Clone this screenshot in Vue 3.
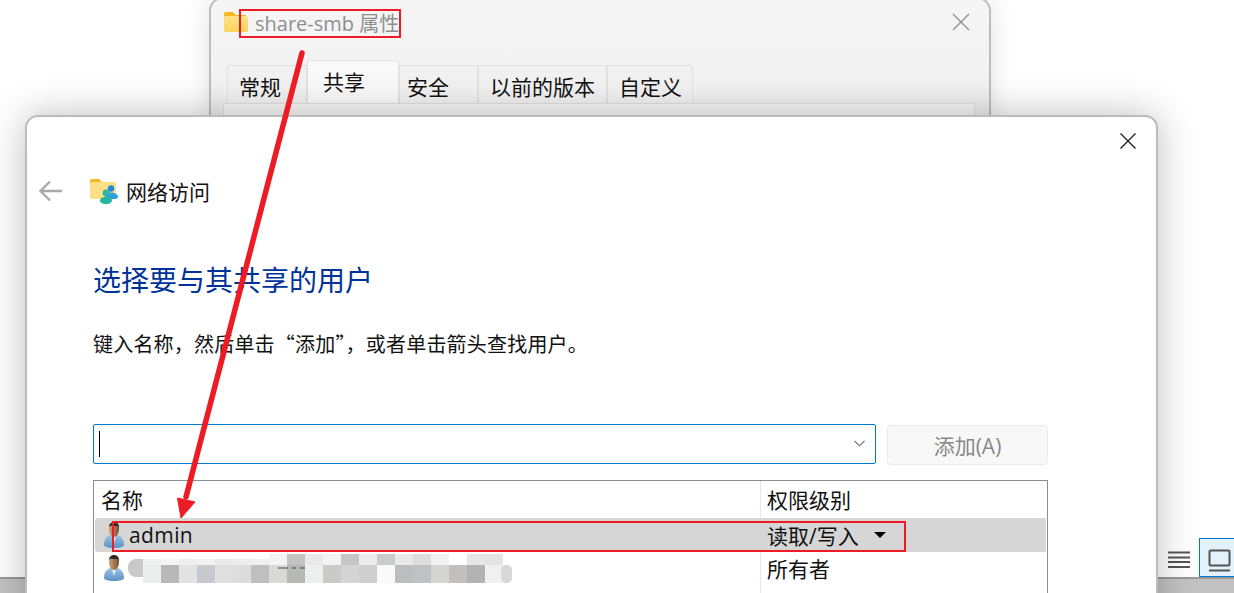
<script setup>
const tabs = [
  { label: '常规', w: 80, pad: 11 },
  { label: '共享', w: 92, pad: 15, active: true },
  { label: '安全', w: 79, pad: 7 },
  { label: '以前的版本', w: 129, pad: 11 },
  { label: '自定义', w: 86, pad: 11 }
]
const top = ['#f0f1f1','#f5f5f5','#eeeeee','#f2f2f2','#e9e9e9','#ececec','#f0f0f0','#f4f4f4','#c4c3c1','#e9e9e9','#f3f3f3','#c6c6c6','#ececec','#c8cccc','#e9e9e9','#dedddd','#f1f1f1','#ffffff','#e6e6e6','#e4e4e4']
const bottom = ['#eceeed','#b8b8b8','#e2e2e2','#c6cad0','#e0e0e0','#dcdcdc','#bfbfc1','#d9d9d6','#b6b8b6','#edefef','#cacac8','#d4d4d4','#d0cfcf','#fafafa','#bcbdbe','#bfc2c3','#d4d4d0','#c3bfbc','#b2b3b4','#f0f0f0']
</script>

<template>
  <div class="desk">
    <div class="explorer">
      <div class="status">
        <svg class="list-ic" width="22" height="17" viewBox="0 0 22 17">
          <path d="M0 1.500h22M0 6.500h22M0 11h22M0 16h22" stroke="#555" stroke-width="1.800" fill="none" />
        </svg>
        <div class="view-btn">
          <svg width="24" height="24" viewBox="0 0 24 24">
            <rect x="1.500" y="1.500" width="20" height="15" rx="1" fill="none" stroke="#555" stroke-width="2" />
            <path d="M1 21.500h21" stroke="#555" stroke-width="2" />
          </svg>
        </div>
      </div>
    </div>

    <section class="back-win">
      <header class="back-title">
        <svg width="26" height="22" viewBox="0 0 26 22">
          <defs>
            <linearGradient id="fy" x1="0" y1="0" x2="0" y2="1">
              <stop offset="0" stop-color="#ffe38a" />
              <stop offset="1" stop-color="#fcd25a" />
            </linearGradient>
          </defs>
          <path d="M1 3a2 2 0 0 1 2-2h7l3 3h10v4H1z" fill="#f5b81f" />
          <rect x="1" y="5" width="24" height="16" rx="2" fill="url(#fy)" />
        </svg>
        <span class="back-name">share-smb 属性</span>
        <svg class="back-x" width="18" height="18" viewBox="0 0 18 18">
          <path d="M1 1l16 16M17 1L1 17" stroke="#8f8f8f" stroke-width="1.300" />
        </svg>
      </header>
      <nav class="tabs">
        <div
          v-for="t in tabs"
          :key="t.label"
          class="tab"
          :class="{ active: t.active }"
          :style="{ width: t.w + 'px', paddingLeft: t.pad + 'px' }"
        >{{ t.label }}</div>
      </nav>
      <div class="back-panel"></div>
    </section>

    <section class="front-win">
      <svg class="front-x" width="16" height="16" viewBox="0 0 16 16">
        <path d="M0.500 0.500l15 15M15.500 0.500l-15 15" stroke="#222" stroke-width="1.400" />
      </svg>
      <header class="nav-row">
        <svg class="back-arrow" width="24" height="22" viewBox="0 0 24 22">
          <path d="M23 11H2M11 1.500L1.500 11l9.500 9.500" fill="none" stroke="#a9a9a9" stroke-width="2.400" />
        </svg>
        <svg class="net-ic" width="28" height="26" viewBox="0 0 28 26">
          <path d="M0 3a2 2 0 0 1 2-2h7l3 3h12v4H0z" fill="#f4b71f" />
          <rect x="0" y="4" width="26" height="17" rx="2" fill="#fcdf86" />
          <circle cx="21" cy="10.500" r="3.200" fill="#1d8be0" />
          <path d="M15 19c0-3 3-4.500 6-4.500s7 1.500 7 4.500c0 1.200-1.500 2-3 2h-8c-1.200 0-2-.8-2-2z" fill="#2e9fdf" />
          <circle cx="16" cy="15" r="3.400" fill="#2bb7a6" />
          <path d="M10 22.500c0-2.500 3-3.500 6-3.500s6 1 6 3.500-3 3.500-6 3.500-6-1-6-3.500z" fill="#25b5a1" />
        </svg>
        <span class="nav-title">网络访问</span>
      </header>

      <div class="body">
        <h1 class="heading">选择要与其共享的用户</h1>
        <p class="hint">键入名称，然后单击“添加”，或者单击箭头查找用户。</p>

        <div class="add-row">
          <div class="combo">
            <span class="caret"></span>
            <svg class="chev" width="11" height="7" viewBox="0 0 11 7">
              <path d="M0.500 0.800l5 5 5-5" fill="none" stroke="#666" stroke-width="1.100" />
            </svg>
          </div>
          <button class="add-btn" type="button">添加(A)</button>
        </div>

        <div class="table">
          <div class="row head">
            <div class="c1 label">名称</div>
            <div class="c2">权限级别</div>
          </div>
          <div class="row sel">
            <div class="c1 user">
              <svg class="person" width="22" height="28" viewBox="0 0 22 28">
                <defs>
                  <linearGradient id="skin" x1="0" y1="0" x2="1" y2="0">
                    <stop offset="0" stop-color="#d0a274" />
                    <stop offset="1" stop-color="#7a5030" />
                  </linearGradient>
                  <linearGradient id="shirt" x1="0" y1="0" x2="0" y2="1">
                    <stop offset="0" stop-color="#9cc2e2" />
                    <stop offset="1" stop-color="#5b92c4" />
                  </linearGradient>
                </defs>
                <path d="M1 24c0-6 3-9 6.500-10h7c3.500 1 6.500 4 6.500 10 0 2-4 3-10 3S1 26 1 24z" fill="url(#shirt)" />
                <path d="M8.500 14l2.500 8 2.500-8z" fill="#e6eef5" />
                <ellipse cx="11" cy="8.500" rx="5" ry="7.500" fill="url(#skin)" />
                <path d="M6 6C6 2.500 8.500 1 11 1s5.500 1.500 5 7l-1-3C12 5 9 5 7.500 4.500z" fill="#2f2a26" />
              </svg>
              <span class="uname">admin</span>
            </div>
            <div class="c2 perm">
              <span>读取/写入</span>
              <span class="tri"></span>
            </div>
          </div>
          <div class="row last">
            <div class="c1 user">
              <svg class="person" width="22" height="28" viewBox="0 0 22 28">
                <path d="M1 24c0-6 3-9 6.500-10h7c3.500 1 6.500 4 6.500 10 0 2-4 3-10 3S1 26 1 24z" fill="url(#shirt)" />
                <path d="M8.500 14l2.500 8 2.500-8z" fill="#e6eef5" />
                <ellipse cx="11" cy="8.500" rx="5" ry="7.500" fill="url(#skin)" />
                <path d="M6 6C6 2.500 8.500 1 11 1s5.500 1.500 5 7l-1-3C12 5 9 5 7.500 4.500z" fill="#2f2a26" />
              </svg>
            </div>
            <div class="c2">所有者</div>
          </div>
        </div>
      </div>
    </section>

    <svg class="mosaic" width="390" height="34" viewBox="0 0 390 34">
      <rect x="0" y="6" width="30" height="18" rx="8" fill="#c9c9c9" />
      <rect
        v-for="(c, i) in top"
        :key="'t' + i"
        :x="15 + i * 18"
        :y="i < 7 ? 6 : 1"
        width="18"
        :height="i < 7 ? 6 : 11"
        :fill="c"
      />
      <rect
        v-for="(c, i) in bottom"
        :key="'b' + i"
        :x="15 + i * 18"
        y="12"
        width="18"
        height="18"
        :fill="c"
      />
      <rect x="373" y="12" width="11" height="18" rx="5" fill="#d8d8d8" />
      <path d="M150 15h10M164 15h4M172 15h5" stroke="#444" stroke-width="1" />
    </svg>

    <div class="mark mark-title"></div>
    <div class="mark mark-row"></div>

    <svg class="arrow" width="1234" height="593" viewBox="0 0 1234 593">
      <path d="M302 53L186 497" stroke="#ed1c24" stroke-width="5.500" stroke-linecap="round" fill="none" />
      <path d="M181 518L177.500 498L195 502z" fill="#ed1c24" stroke="#ed1c24" stroke-width="1" stroke-linejoin="round" />
    </svg>
  </div>
</template>

<style>
html, body { margin: 0; padding: 0; background: #fff; }
</style>

<style scoped>
.desk {
  position: relative;
  width: 1234px;
  height: 593px;
  overflow: hidden;
  background: #c2c2c2;
  font-family: "Open Sans", "Noto Sans CJK SC", sans-serif;
  color: #111;
}
.explorer {
  position: absolute;
  left: 0;
  top: 0;
  width: 1234px;
  height: 577px;
  background: #fff;
  border-bottom: 2px solid #9a9a9a;
}
.status {
  position: absolute;
  right: 0;
  bottom: 0;
  display: flex;
  align-items: center;
  gap: 9px;
}
.list-ic { margin-top: 3px; }
.view-btn {
  width: 35px;
  height: 39px;
  box-sizing: border-box;
  padding: 10px 0 0 8px;
  background: #e3f1fa;
  border: 1px solid #0078d4;
  border-right: none;
}
.back-win {
  position: absolute;
  left: 209px;
  top: -3px;
  width: 782px;
  height: 140px;
  box-sizing: border-box;
  border: 2px solid #bdbdbd;
  border-radius: 14px;
  background: linear-gradient(#f5f5f5, #f2f2f2 60%, #e9e9e9);
  box-shadow: 0 0 26px rgba(0, 0, 0, 0.12);
}
.back-title {
  display: flex;
  align-items: center;
  height: 44px;
  margin-top: 1px;
  padding-left: 12px;
  position: relative;
}
.back-name {
  margin-left: 6px;
  font-size: 20px;
  color: #8f8f8f;
}
.back-x {
  position: absolute;
  right: 19px;
  top: 13px;
}
.tabs {
  display: flex;
  align-items: flex-end;
  height: 58px;
  margin: 1px 0 0 16px;
}
.tab {
  height: 38px;
  box-sizing: border-box;
  padding-top: 2px;
  border: 1px solid #e2e2e2;
  border-bottom: none;
  background: #f1f1f1;
  display: flex;
  align-items: center;
  font-size: 21px;
  color: #111;
}
.tab.active {
  height: 43px;
  padding-top: 0;
  padding-bottom: 3px;
  background: #f9f9f9;
  border-radius: 3px 3px 0 0;
}
.back-panel {
  width: 752px;
  height: 30px;
  margin-left: 12px;
  box-sizing: border-box;
  border: 1px solid #e0e0e0;
  background: #f7f7f7;
}
.front-win {
  position: absolute;
  left: 25px;
  top: 115px;
  width: 1133px;
  height: 520px;
  box-sizing: border-box;
  border: 2px solid #bcbcbc;
  border-radius: 13px;
  background: #fff;
  box-shadow: 0 0 38px rgba(0, 0, 0, 0.26);
}
.front-x {
  position: absolute;
  right: 20px;
  top: 16px;
}
.nav-row {
  display: flex;
  align-items: center;
  height: 30px;
  margin-top: 59px;
  padding-left: 12px;
}
.back-arrow { flex: none; }
.net-ic { margin-left: 27px; flex: none; }
.nav-title {
  margin-left: 8px;
  font-size: 21px;
}
.body {
  padding-left: 66px;
}
.heading {
  margin: 54px 0 0;
  font-size: 28px;
  line-height: 40px;
  font-weight: 400;
  color: #003399;
}
.hint {
  margin: 29px 0 0;
  font-family: "Noto Sans CJK SC", sans-serif;
  font-size: 20px;
  letter-spacing: 0.2px;
  line-height: 30px;
}
.add-row {
  display: flex;
  gap: 11px;
  width: 955px;
  margin-top: 65px;
}
.combo {
  position: relative;
  width: 783px;
  height: 40px;
  box-sizing: border-box;
  border: 1px solid #0078d4;
  border-radius: 2px;
  background: #fff;
}
.caret {
  position: absolute;
  left: 5px;
  top: 6px;
  width: 1px;
  height: 26px;
  background: #000;
}
.chev {
  position: absolute;
  right: 10px;
  top: 15px;
}
.add-btn {
  width: 161px;
  height: 40px;
  margin-top: 1px;
  border: 1px solid #ebebeb;
  border-radius: 4px;
  background: #f8f8f8;
  color: #888;
  font-family: inherit;
  font-size: 21px;
  padding: 0;
}
.table {
  width: 955px;
  height: 130px;
  box-sizing: border-box;
  margin-top: 15px;
  padding: 0 1px;
  border: 1px solid #8b8b94;
  border-bottom: none;
  position: relative;
}
.table::before {
  content: "";
  position: absolute;
  left: 666px;
  top: 0;
  bottom: 0;
  width: 1px;
  background: #e4e7ee;
}
.row {
  display: flex;
  align-items: center;
  height: 34px;
  box-sizing: border-box;
  font-size: 21px;
  position: relative;
}
.row.head { height: 37px; padding-bottom: 2px; }
.row.last { padding-bottom: 2px; }
.row.sel {
  background: #d6d6d6;
  border-radius: 3px 0 0 3px;
}
.c1 {
  width: 665px;
  box-sizing: border-box;
  flex: none;
}
.label { padding-left: 6px; }
.c2 { padding-left: 7px; }
.user {
  display: flex;
  align-items: center;
  padding-left: 8px;
}
.person { flex: none; }
.uname {
  margin-left: 4px;
  font-size: 21px;
  letter-spacing: 0.4px;
}
.perm {
  display: flex;
  align-items: center;
  gap: 15px;
}
.tri {
  width: 0;
  height: 0;
  border-left: 6px solid transparent;
  border-right: 6px solid transparent;
  border-top: 6px solid #000;
}
.mosaic {
  position: absolute;
  left: 128px;
  top: 553px;
}
.mark {
  position: absolute;
  box-sizing: border-box;
  border: 2px solid #ed1c24;
}
.mark-title {
  left: 239px;
  top: 9px;
  width: 162px;
  height: 29px;
}
.mark-row {
  left: 112px;
  top: 521px;
  width: 794px;
  height: 31px;
}
.arrow {
  position: absolute;
  left: 0;
  top: 0;
  pointer-events: none;
}
</style>
